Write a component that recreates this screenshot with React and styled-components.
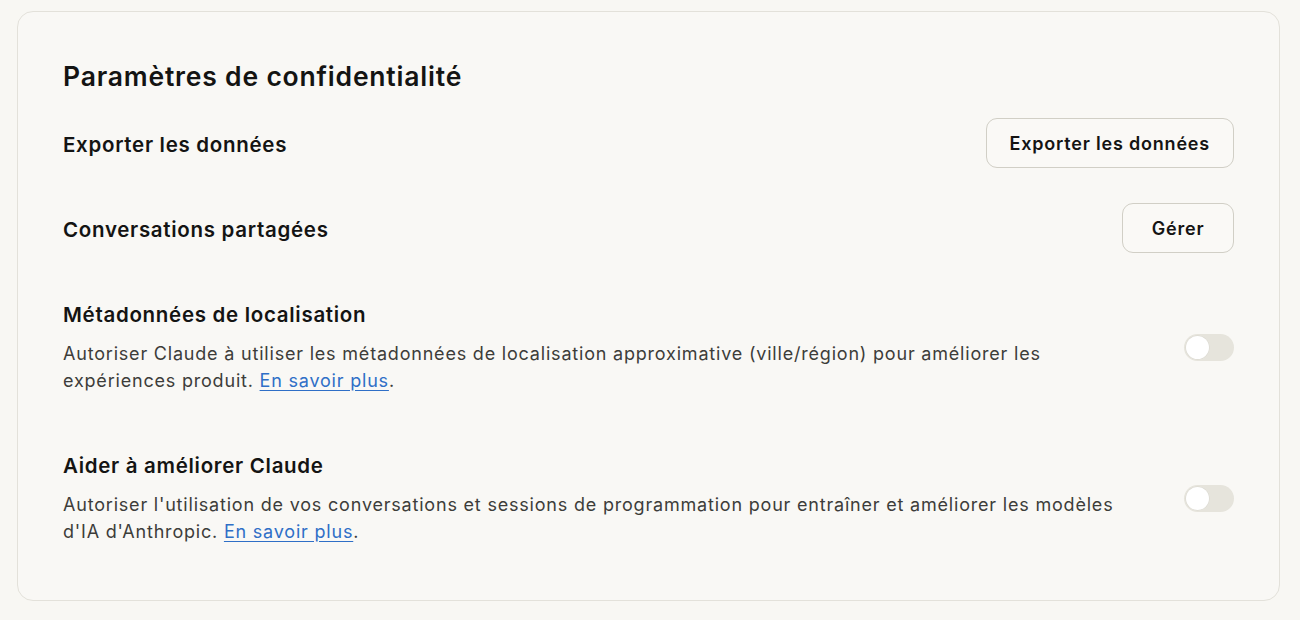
import React from "react";
import styled, { createGlobalStyle } from "styled-components";

const Global = createGlobalStyle`
  html, body { margin: 0; padding: 0; background: #f8f7f3; }
  body { font-family: Inter, "Noto Sans", sans-serif; color: #141413; }
`;

const Page = styled.div`
  padding: 11px 20px 18px 17px;
`;

const Card = styled.section`
  box-sizing: border-box;
  width: 1263px;
  min-height: 590px;
  border: 1px solid #e3e1da;
  border-radius: 16px;
  background: #f9f8f5;
  padding: 48px 45px 40px 45px;
  display: flex;
  flex-direction: column;
`;

const Title = styled.h2`
  margin: 0 0 26px 0;
  font-size: 26.5px;
  line-height: 32px;
  font-weight: 600;
  letter-spacing: 0.8px;
`;

const Row = styled.div`
  display: flex;
  align-items: center;
  justify-content: space-between;
  gap: 40px;
  margin-bottom: ${(p) => p.$gap || 0}px;
`;

const Label = styled.div`
  font-size: 20.5px;
  font-weight: 600;
  line-height: 28px;
  letter-spacing: 0.7px;
  padding-top: ${(p) => (p.$nudge ? 3 : 0)}px;
`;

const Button = styled.button`
  box-sizing: border-box;
  height: 50px;
  min-width: 112px;
  padding: 0 23px;
  border: 1px solid #d1cfc6;
  border-radius: 11px;
  background: #faf9f6;
  font-family: inherit;
  font-size: 18px;
  font-weight: 600;
  letter-spacing: 0.8px;
  color: #141413;
  cursor: pointer;
`;

const Block = styled.div`
  display: flex;
  flex-direction: column;
  gap: 11px;
  width: 1072px;
`;

const Desc = styled.p`
  margin: 0;
  font-size: 18px;
  line-height: 27px;
  letter-spacing: 0.8px;
  color: #3d3d3a;
`;

const Link = styled.a`
  color: #2f6fc7;
  text-decoration: underline;
  text-underline-offset: 3px;
`;

const Track = styled.span`
  flex: none;
  box-sizing: border-box;
  width: 50px;
  height: 27px;
  border-radius: 14px;
  background: #e6e4dc;
  padding: 2px;
  display: flex;
  align-items: center;
`;

const Knob = styled.span`
  width: 23px;
  height: 23px;
  border-radius: 50%;
  background: #ffffff;
  box-shadow: 0 0 0 0.5px rgba(0, 0, 0, 0.06);
`;

const Toggle = () => (
  <Track role="switch" aria-checked="false">
    <Knob />
  </Track>
);

export default function App() {
  return (
    <>
      <Global />
      <Page>
        <Card>
          <Title>Paramètres de confidentialité</Title>
          <Row $gap={35}>
            <Label $nudge>Exporter les données</Label>
            <Button>Exporter les données</Button>
          </Row>
          <Row $gap={48}>
            <Label $nudge>Conversations partagées</Label>
            <Button>Gérer</Button>
          </Row>
          <Row $gap={58}>
            <Block>
              <Label>Métadonnées de localisation</Label>
              <Desc>
                Autoriser Claude à utiliser les métadonnées de localisation approximative (ville/région) pour améliorer les expériences produit. <Link href="#">En savoir plus</Link>.
              </Desc>
            </Block>
            <Toggle />
          </Row>
          <Row>
            <Block>
              <Label>Aider à améliorer Claude</Label>
              <Desc>
                Autoriser l'utilisation de vos conversations et sessions de programmation pour entraîner et améliorer les modèles d'IA d'Anthropic. <Link href="#">En savoir plus</Link>.
              </Desc>
            </Block>
            <Toggle />
          </Row>
        </Card>
      </Page>
    </>
  );
}
